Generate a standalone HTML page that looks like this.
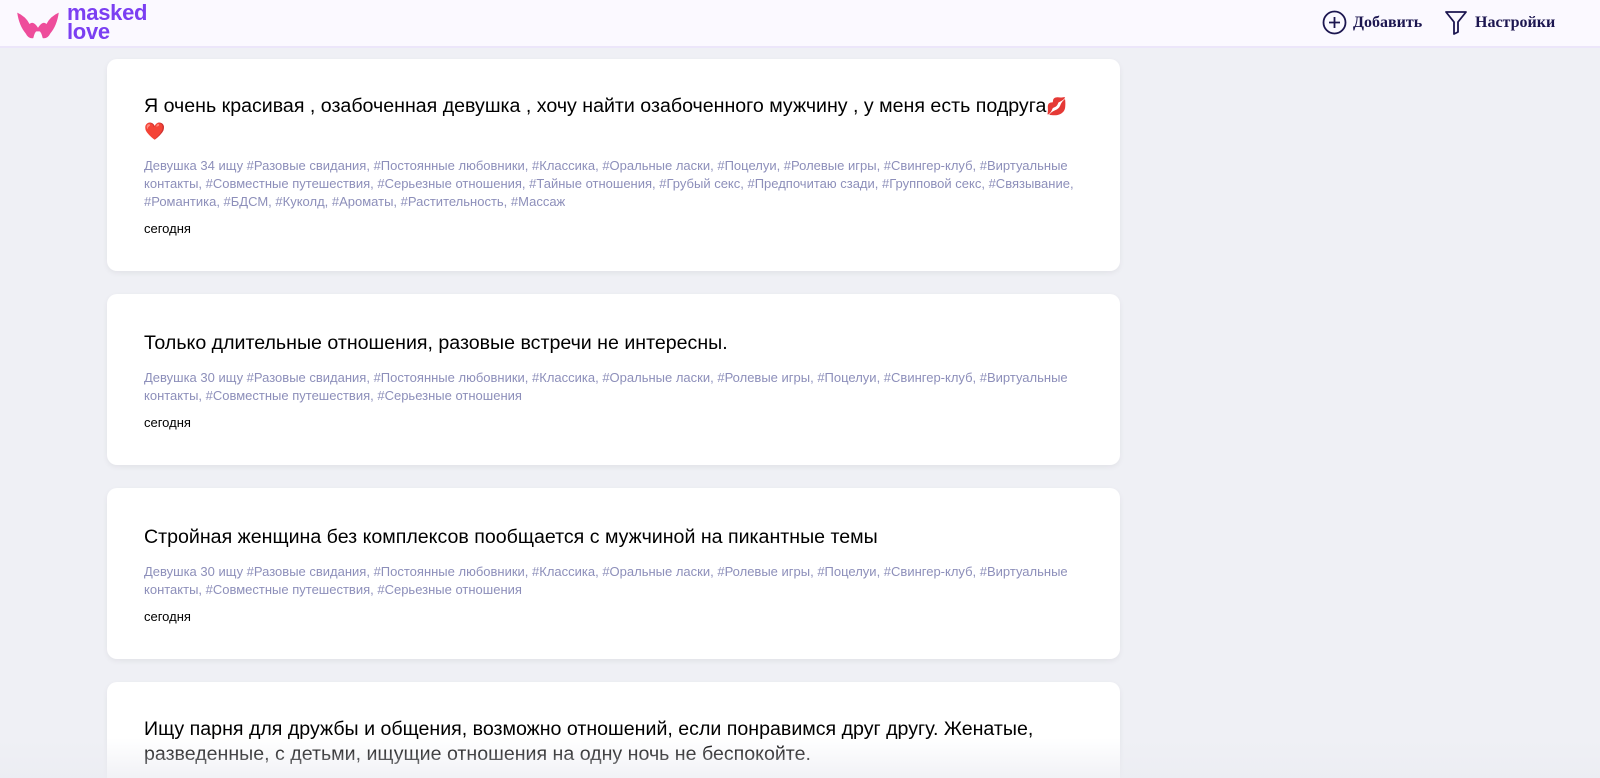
<!DOCTYPE html>
<html style="width:1600px;height:778px;overflow:hidden"><head><meta charset="utf-8"><style>
*{box-sizing:border-box;margin:0;padding:0}
body{width:1600px;height:778px;overflow:hidden;background:#eff0f5;font-family:"Liberation Sans",sans-serif;position:relative}
.hdr{position:absolute;left:0;top:0;width:1600px;height:48px;background:#fbf9ff;border-bottom:2px solid #ece6fa;z-index:2}
.logo{position:absolute;left:15px;top:7px}
.lt{position:absolute;left:67px;top:3px;color:#7b3ff2;font-weight:bold;font-size:22px;line-height:19px;letter-spacing:-0.3px}
.nav{position:absolute;top:10px;font-family:"Liberation Serif",serif;font-weight:bold;color:#1c1650;font-size:16px;display:flex;align-items:center}
.card{position:absolute;left:107px;width:1013px;background:#fff;border-radius:10px;box-shadow:0 2px 6px rgba(0,0,0,0.06);padding:35px 30px 0 37px}
.t{font-size:19.6px;line-height:25px;color:#000;white-space:nowrap}
.g{margin-top:13px;font-size:13px;line-height:18px;color:#8d8fba;padding-right:6px}
.d{margin-top:10px;font-size:13px;color:#000}
.fade{position:absolute;left:0;top:738px;width:1600px;height:40px;background:linear-gradient(rgba(235,236,242,0),rgba(235,236,242,0.7));z-index:3}
</style></head><body>
<div class="hdr">
<svg class="logo" width="46" height="34" viewBox="0 0 46 36"><path d="M1 6 Q10 10 14 18 Q18 14 23 22 Q28 14 32 18 Q36 10 45 6 Q43 20 36 28 Q33 34 28 33 Q26 24 23 26 Q20 24 18 33 Q13 34 10 28 Q3 20 1 6Z" fill="#ee4d9b"/></svg>
<div class="lt">masked<br>love</div>
<div class="nav" style="left:1322px"><svg width="25" height="25" viewBox="0 0 25 25" style="margin-right:6px"><circle cx="12.5" cy="12.5" r="11" fill="none" stroke="#1c1650" stroke-width="1.8"/><path d="M12.5 7v11M7 12.5h11" stroke="#1c1650" stroke-width="1.8"/></svg>Добавить</div>
<div class="nav" style="left:1444px"><svg width="24" height="26" viewBox="0 0 24 26" style="margin-right:7px"><path d="M2 2h20l-8 10v10l-4 2V12Z" fill="none" stroke="#1c1650" stroke-width="1.8" stroke-linejoin="round"/></svg>Настройки</div>
</div>
<div class="card" style="top:59px;height:212px"><div class="t">Я очень красивая , озабоченная девушка , хочу найти озабоченного мужчину , у меня есть подруга<span style="font-size:17px">💋</span><br><span style="font-size:17px">❤️</span></div><div class="g">Девушка 34 ищу #Разовые свидания, #Постоянные любовники, #Классика, #Оральные ласки, #Поцелуи, #Ролевые игры, #Свингер-клуб, #Виртуальные контакты, #Совместные путешествия, #Серьезные отношения, #Тайные отношения, #Грубый секс, #Предпочитаю сзади, #Групповой секс, #Связывание, #Романтика, #БДСМ, #Куколд, #Ароматы, #Растительность, #Массаж</div><div class="d">сегодня</div></div>
<div class="card" style="top:294px;height:171px;padding-top:37px"><div class="t">Только длительные отношения, разовые встречи не интересны.</div><div class="g">Девушка 30 ищу #Разовые свидания, #Постоянные любовники, #Классика, #Оральные ласки, #Ролевые игры, #Поцелуи, #Свингер-клуб, #Виртуальные контакты, #Совместные путешествия, #Серьезные отношения</div><div class="d">сегодня</div></div>
<div class="card" style="top:488px;height:171px;padding-top:37px"><div class="t">Стройная женщина без комплексов пообщается с мужчиной на пикантные темы</div><div class="g">Девушка 30 ищу #Разовые свидания, #Постоянные любовники, #Классика, #Оральные ласки, #Ролевые игры, #Поцелуи, #Свингер-клуб, #Виртуальные контакты, #Совместные путешествия, #Серьезные отношения</div><div class="d">сегодня</div></div>
<div class="card" style="top:682px;height:96px;border-radius:10px 10px 0 0"><div class="t">Ищу парня для дружбы и общения, возможно отношений, если понравимся друг другу. Женатые,<br>разведенные, с детьми, ищущие отношения на одну ночь не беспокойте.</div></div>
<div class="fade"></div>
</body></html>
